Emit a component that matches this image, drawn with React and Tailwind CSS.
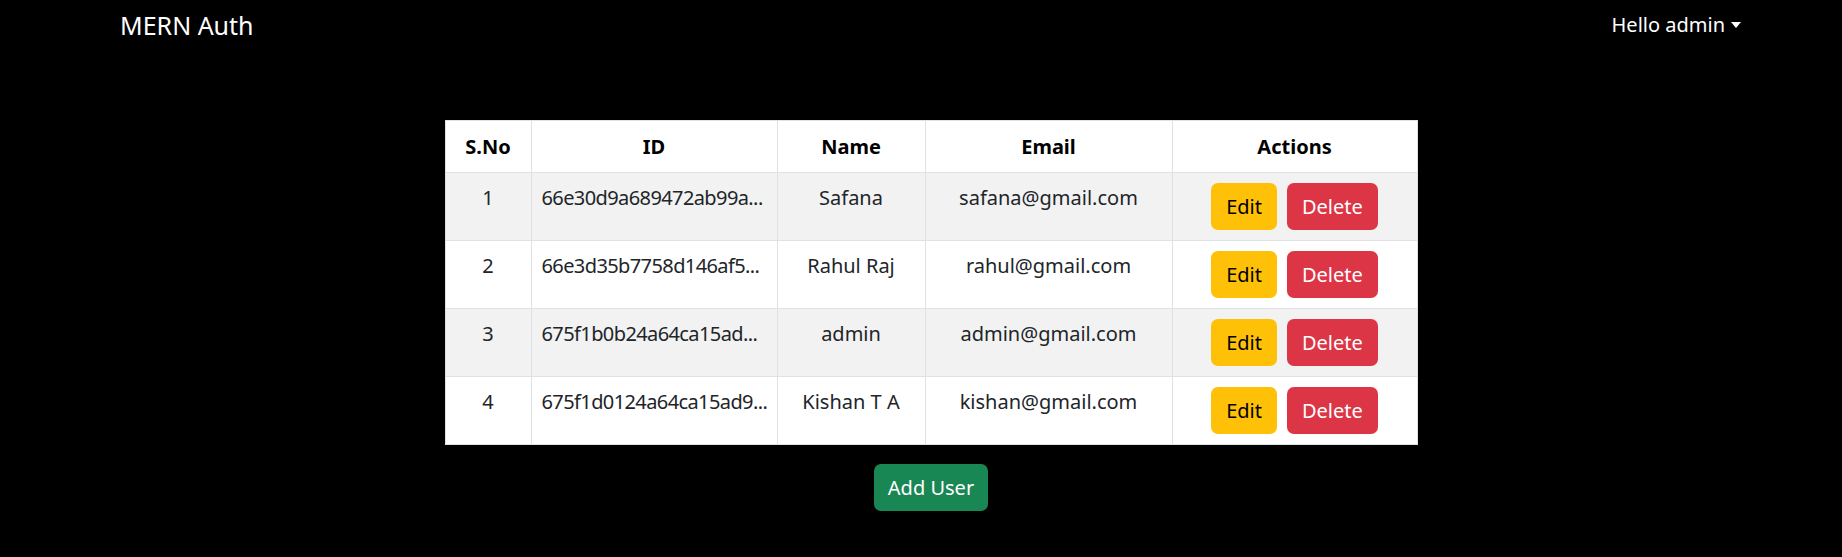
import React from "react";

const users = [
  { id: "66e30d9a689472ab99a...", name: "Safana", email: "safana@gmail.com" },
  { id: "66e3d35b7758d146af5...", name: "Rahul Raj", email: "rahul@gmail.com" },
  { id: "675f1b0b24a64ca15ad...", name: "admin", email: "admin@gmail.com" },
  { id: "675f1d0124a64ca15ad9...", name: "Kishan T A", email: "kishan@gmail.com" },
];

function Navbar() {
  return (
    <nav className="flex items-center justify-between h-[50px] pl-[120px] pr-[101px] bg-black text-white">
      <span className="text-[25px] leading-none">MERN Auth</span>
      <button className="flex items-center text-[20px] leading-none text-white">
        Hello admin
        <span className="ml-[6px] w-0 h-0 border-t-[6px] border-t-white border-x-[5px] border-x-transparent" />
      </button>
    </nav>
  );
}

function UserTable() {
  return (
    <table className="w-[972px] border-collapse border border-[#dee2e6] bg-white text-[20px] leading-[30px] text-[#212529] table-fixed">
      <colgroup>
        <col className="w-[86px]" />
        <col className="w-[246px]" />
        <col className="w-[148px]" />
        <col className="w-[247px]" />
        <col className="w-[245px]" />
      </colgroup>
      <thead>
        <tr className="h-[52px]">
          <th className="border border-[#dee2e6] px-[10px] py-[10px] font-bold text-black">S.No</th>
          <th className="border border-[#dee2e6] px-[10px] py-[10px] font-bold text-black">ID</th>
          <th className="border border-[#dee2e6] px-[10px] py-[10px] font-bold text-black">Name</th>
          <th className="border border-[#dee2e6] px-[10px] py-[10px] font-bold text-black">Email</th>
          <th className="border border-[#dee2e6] px-[10px] py-[10px] font-bold text-black">Actions</th>
        </tr>
      </thead>
      <tbody>
        {users.map((user, index) => (
          <tr key={user.id} className={`h-[68px] ${index % 2 === 0 ? "bg-[#f2f2f2]" : "bg-white"}`}>
            <td className="border border-[#dee2e6] px-[10px] py-[10px] align-top text-center">{index + 1}</td>
            <td className="border border-[#dee2e6] pl-[10px] pr-0 py-[10px] align-top">
              <div className="whitespace-nowrap tracking-[-0.6px]">{user.id}</div>
            </td>
            <td className="border border-[#dee2e6] px-[10px] py-[10px] align-top text-center">{user.name}</td>
            <td className="border border-[#dee2e6] px-[10px] py-[10px] align-top text-center">{user.email}</td>
            <td className="border border-[#dee2e6] px-[10px] py-[10px] align-top">
              <div className="flex justify-center gap-[10px]">
                <button className="h-[47px] px-[15px] rounded-[7px] bg-[#ffc107] text-black text-[20px]">Edit</button>
                <button className="h-[47px] px-[15px] rounded-[7px] bg-[#dc3545] text-white text-[20px]">Delete</button>
              </div>
            </td>
          </tr>
        ))}
      </tbody>
    </table>
  );
}

export default function App() {
  return (
    <div className="min-h-[557px] bg-black" style={{ fontFamily: '"Noto Sans", sans-serif' }}>
      <Navbar />
      <main className="flex flex-col items-center pt-[70px] pl-[20px]">
        <UserTable />
        <button className="mt-[19px] h-[47px] px-[14px] rounded-[7px] bg-[#198754] text-white text-[20px]">
          Add User
        </button>
      </main>
    </div>
  );
}
